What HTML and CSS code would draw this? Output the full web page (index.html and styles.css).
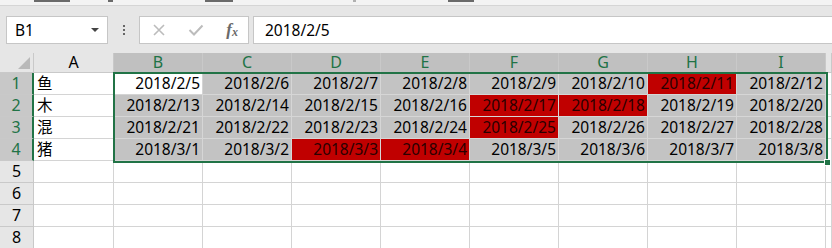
FILE: index.html
```html
<!DOCTYPE html>
<html lang="zh-CN">
<head>
    <meta charset="UTF-8">
    <title>Excel - 日期</title>
    <link rel="stylesheet" href="styles.css">
</head>
<body>
    <!-- Bordo inferiore della ribbon (tagliato) -->
    <div class="ribbon-edge">
        <i class="bit b1"></i>
        <i class="bit b2"></i>
        <i class="bit b3"></i>
        <i class="bit b4"></i>
        <i class="bit b5"></i>
    </div>

    <!-- Barra della formula -->
    <div class="formula-bar">
        <div class="name-box">
            <span>B1</span>
            <span class="caret"></span>
        </div>
        <div class="grip"><i></i><i></i><i></i></div>
        <div class="fx-buttons">
            <svg width="14" height="14" viewBox="0 0 14 14"><path d="M2 2 L12 12 M12 2 L2 12" stroke="#bcbcbc" stroke-width="1.6" fill="none"/></svg>
            <svg width="16" height="14" viewBox="0 0 16 14"><path d="M1.5 7 L6 11.5 L14.5 2.5" stroke="#bcbcbc" stroke-width="2" fill="none"/></svg>
            <span class="fx">f<sub>x</sub></span>
        </div>
        <div class="formula-input">2018/2/5</div>
    </div>

    <!-- Foglio -->
    <div class="sheet-wrap">
        <div class="sheet" id="sheet"></div>
        <div class="selection"><span class="handle"></span></div>
    </div>

    <script>
        const cols = ['A', 'B', 'C', 'D', 'E', 'F', 'G', 'H', 'I'];
        const names = ['鱼', '木', '混', '猪'];
        const dates = [
            ['2018/2/5', '2018/2/6', '2018/2/7', '2018/2/8', '2018/2/9', '2018/2/10', '2018/2/11', '2018/2/12'],
            ['2018/2/13', '2018/2/14', '2018/2/15', '2018/2/16', '2018/2/17', '2018/2/18', '2018/2/19', '2018/2/20'],
            ['2018/2/21', '2018/2/22', '2018/2/23', '2018/2/24', '2018/2/25', '2018/2/26', '2018/2/27', '2018/2/28'],
            ['2018/3/1', '2018/3/2', '2018/3/3', '2018/3/4', '2018/3/5', '2018/3/6', '2018/3/7', '2018/3/8']
        ];
        // celle evidenziate in rosso (riga, colonna B=0)
        const red = ['0-6', '1-4', '1-5', '2-4', '3-2', '3-3'];

        const sheet = document.getElementById('sheet');
        let html = '<div class="corner"><span class="tri"></span></div>';
        cols.forEach((c, i) => {
            html += `<div class="col-head${i > 0 ? ' sel' : ''}">${c}</div>`;
        });
        html += '<div class="col-head"></div>';

        for (let r = 0; r < 8; r++) {
            html += `<div class="row-head${r < 4 ? ' sel' : ''}">${r + 1}</div>`;
            html += `<div class="cell text">${r < 4 ? names[r] : ''}</div>`;
            for (let c = 0; c < 8; c++) {
                let cls = 'cell';
                let val = '';
                if (r < 4) {
                    val = dates[r][c];
                    if (r === 0 && c === 0) cls += ' active';
                    else if (red.includes(`${r}-${c}`)) cls += ' red';
                    else cls += ' grey';
                }
                html += `<div class="${cls}">${val}</div>`;
            }
            html += '<div class="cell"></div>';
        }
        sheet.innerHTML = html;
    </script>
</body>
</html>
```

FILE: styles.css
```css
/* Reset di base */
* { margin: 0; padding: 0; box-sizing: border-box; }

body {
    width: 832px;
    height: 248px;
    overflow: hidden;
    background: #e6e6e6;
    font-family: 'Noto Sans', 'Noto Sans CJK SC', sans-serif;
    color: #000000;
}

/* Ribbon tagliata in alto */
.ribbon-edge {
    height: 6px;
    background: #f3f3f3;
    border-bottom: 1px solid #d5d5d5;
    display: flex;
    align-items: flex-start;
}

.bit {
    display: block;
    height: 2px;
    background: #6a6a6a;
}

.b1 { margin-left: 34px; width: 36px; }
.b2 { margin-left: 38px; width: 5px; }
.b3 { margin-left: 92px; width: 28px; }
.b4 { margin-left: 120px; width: 3px; background: #b0b0b0; }
.b5 { margin-left: 92px; width: 26px; }

/* Barra della formula */
.formula-bar {
    display: flex;
    align-items: center;
    padding: 0 0 0 6px;
    height: 47px;
}

.name-box {
    width: 102px;
    height: 28px;
    background: #ffffff;
    border: 1px solid #c6c6c6;
    display: flex;
    align-items: center;
    justify-content: space-between;
    padding: 0 8px 0 8px;
    font-size: 15.5px;
}

.caret {
    width: 0;
    height: 0;
    border-left: 4px solid transparent;
    border-right: 4px solid transparent;
    border-top: 4px solid #444444;
}

.grip {
    width: 31px;
    display: flex;
    flex-direction: column;
    align-items: center;
    gap: 2px;
}

.grip i {
    display: block;
    width: 2px;
    height: 2px;
    background: #666666;
}

.fx-buttons {
    width: 110px;
    height: 28px;
    background: #ffffff;
    border: 1px solid #c6c6c6;
    display: flex;
    align-items: center;
    justify-content: space-between;
    padding: 0 10px 0 12px;
    margin-right: 4px;
}

.fx {
    font-family: 'Liberation Serif', serif;
    font-style: italic;
    font-weight: bold;
    font-size: 17px;
    color: #6a6a6a;
    line-height: 1;
}

.fx sub {
    font-size: 12px;
    vertical-align: -1px;
}

.formula-input {
    flex: 1;
    height: 28px;
    background: #ffffff;
    border: 1px solid #c6c6c6;
    border-right: none;
    font-size: 15.5px;
    line-height: 26px;
    padding-left: 11px;
}

/* Foglio */
.sheet-wrap {
    position: relative;
}

.sheet {
    display: grid;
    grid-template-columns: 34px 80px repeat(8, 89px) 1fr;
    grid-template-rows: 20px repeat(8, 22px);
    font-size: 15.5px;
}

.corner,
.col-head,
.row-head {
    background: #e6e6e6;
    border-right: 1px solid #c9c9c9;
    border-bottom: 1px solid #c9c9c9;
    text-align: center;
}

.corner {
    position: relative;
}

.tri {
    position: absolute;
    right: 3px;
    bottom: 3px;
    width: 0;
    height: 0;
    border-left: 12px solid transparent;
    border-bottom: 12px solid #b9b9b9;
}

.col-head {
    line-height: 19px;
    font-size: 16px;
}

.col-head.sel {
    background: #c0c0c0;
    color: #217346;
}

.row-head {
    line-height: 21px;
    font-size: 16px;
}

.row-head.sel {
    background: #c8c8c8;
    color: #217346;
    border-right: 2px solid #217346;
}

.cell {
    background: #ffffff;
    border-right: 1px solid #d4d4d4;
    border-bottom: 1px solid #d4d4d4;
    line-height: 21px;
    text-align: right;
    padding-right: 2px;
    white-space: nowrap;
    overflow: hidden;
}

.cell.text {
    text-align: left;
    padding-left: 3px;
}

.cell.grey {
    background: #c3c3c3;
    border-color: #d6d6d6;
}

.cell.red {
    background: #c00000;
    border-color: #d6d6d6;
    color: #2a0000;
}

/* Bordo di selezione */
.selection {
    position: absolute;
    left: 113px;
    top: 19px;
    width: 715px;
    height: 91px;
    border: 2px solid #217346;
}

.handle {
    position: absolute;
    right: -5px;
    bottom: -5px;
    width: 7px;
    height: 7px;
    background: #217346;
    border: 1px solid #ffffff;
}
```
